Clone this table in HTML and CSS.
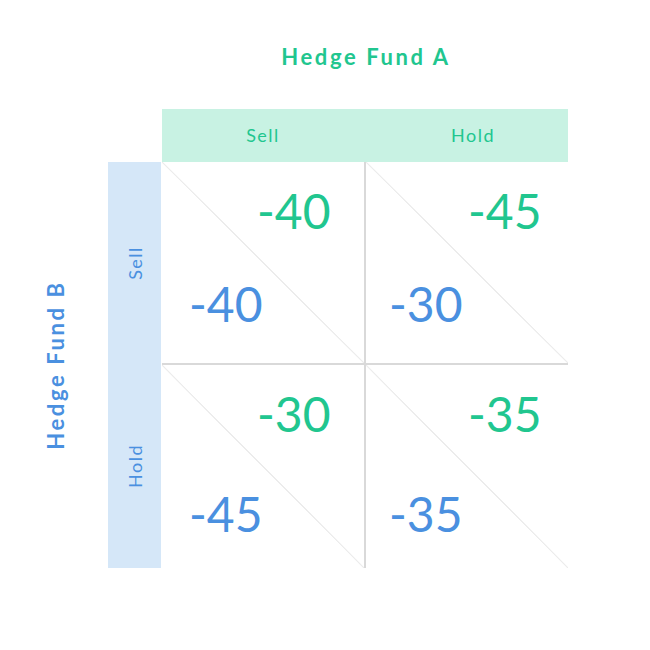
FILE: index.html
```html
<!DOCTYPE html>
<html>
<head>
<meta charset="utf-8">
<link rel="stylesheet" href="styles.css">
</head>
<body>
<div class="board">
  <div class="title-a">Hedge Fund A</div>
  <div class="head">
    <div class="head-cell">Sell</div>
    <div class="head-cell head-hold">Hold</div>
  </div>
  <div class="title-b"><span>Hedge Fund B</span></div>
  <div class="side">
    <div class="side-cell"><span>Sell</span></div>
    <div class="side-cell"><span>Hold</span></div>
  </div>
  <div class="matrix">
    <div class="cell"><div class="num a">-40</div><div class="num b">-40</div></div>
    <div class="cell"><div class="num a">-45</div><div class="num b">-30</div></div>
    <div class="cell low"><div class="num a">-30</div><div class="num b">-45</div></div>
    <div class="cell low"><div class="num a">-35</div><div class="num b">-35</div></div>
  </div>
</div>
</body>
</html>
```

FILE: styles.css
```css
* { box-sizing: border-box; margin: 0; padding: 0; }
html, body { background: #ffffff; }
body { font-family: Lato, "Open Sans", sans-serif; }

.board {
  display: grid;
  grid-template-columns: 108px 54px 406px;
  grid-template-rows: 109px 53px 406px;
  width: 650px;
  height: 650px;
}

.title-a {
  grid-column: 3;
  grid-row: 1;
  padding-top: 46px;
  padding-left: 2px;
  text-align: center;
  font-weight: 700;
  font-size: 22px;
  line-height: 1;
  letter-spacing: 2.6px;
  color: #21c68f;
}

.head {
  grid-column: 3;
  grid-row: 2;
  display: grid;
  grid-template-columns: 202px 204px;
  background: #c8f2e3;
}
.head-cell {
  display: flex;
  align-items: center;
  justify-content: center;
  font-size: 18px;
  letter-spacing: 1.5px;
  color: #21c68f;
  padding-bottom: 1px;
}
.head-hold { padding-left: 14px; }

.title-b {
  grid-column: 1;
  grid-row: 3;
  display: flex;
  align-items: center;
  justify-content: center;
  padding-left: 4px;
}
.title-b span {
  display: block;
  transform: rotate(-90deg);
  white-space: nowrap;
  font-weight: 700;
  font-size: 22px;
  line-height: 1;
  letter-spacing: 2.6px;
  color: #4a90e0;
}

.side {
  grid-column: 2;
  grid-row: 3;
  display: grid;
  grid-template-rows: 202px 204px;
  background: #d5e7f8;
  margin-right: 1px;
}
.side-cell {
  display: flex;
  align-items: center;
  justify-content: center;
}
.side-cell span {
  display: block;
  transform: rotate(-90deg);
  font-size: 18px;
  letter-spacing: 1.5px;
  color: #4a90e0;
}

.matrix {
  grid-column: 3;
  grid-row: 3;
  display: grid;
  grid-template-columns: 202px 202px;
  grid-template-rows: 201px 203px;
  gap: 2px;
  background: #d9d9d9;
}
.cell {
  background-color: #ffffff;
  background-image: linear-gradient(to top right, transparent calc(50% - 0.8px), #ececec calc(50% - 0.5px), #ececec calc(50% + 0.5px), transparent calc(50% + 0.8px));
  display: flex;
  flex-direction: column;
  padding-top: 25px;
}
.num {
  font-size: 48px;
  line-height: 1;
}
.num.a { color: #21c68f; padding-left: 95px; }
.num.b { color: #4a90e0; padding-left: 27px; margin-top: 45px; }
.cell:nth-child(even) .num.a { padding-left: 102px; }
.cell:nth-child(even) .num.b { padding-left: 23px; }
.cell.low .num.b { margin-top: 52px; }
```
